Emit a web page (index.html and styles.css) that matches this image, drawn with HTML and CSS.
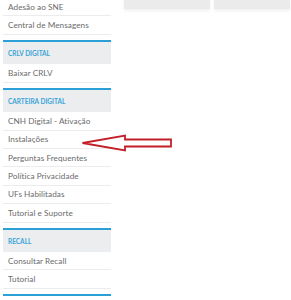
FILE: index.html
```html
<!DOCTYPE html>
<html lang="pt-BR">
<head>
    <meta charset="UTF-8">
    <meta name="viewport" content="width=device-width, initial-scale=1.0">
    <title>Menu</title>
    <link rel="stylesheet" href="styles.css">
</head>
<body>
    <div class="page">
        <!-- Menu lateral -->
        <aside class="sidebar">
            <ul class="menu">
                <li><a href="#">Adesão ao SNE</a></li>
                <li><a href="#">Central de Mensagens</a></li>
            </ul>
            <div class="menu-section">
                <h3>CRLV Digital</h3>
                <ul class="menu">
                    <li><a href="#">Baixar CRLV</a></li>
                </ul>
            </div>
            <div class="menu-section">
                <h3>Carteira Digital</h3>
                <ul class="menu">
                    <li><a href="#">CNH Digital - Ativação</a></li>
                    <li><a href="#">Instalações</a></li>
                    <li><a href="#">Perguntas Frequentes</a></li>
                    <li><a href="#">Política Privacidade</a></li>
                    <li><a href="#">UFs Habilitadas</a></li>
                    <li><a href="#">Tutorial e Suporte</a></li>
                </ul>
            </div>
            <div class="menu-section">
                <h3>Recall</h3>
                <ul class="menu">
                    <li><a href="#">Consultar Recall</a></li>
                    <li><a href="#">Tutorial</a></li>
                </ul>
            </div>
            <div class="menu-section"></div>
        </aside>

        <!-- Conteúdo -->
        <main class="content">
            <div class="cards">
                <div class="card"></div>
                <div class="card"></div>
            </div>
        </main>
    </div>

    <!-- Seta de destaque -->
    <svg class="arrow" width="100" height="24" viewBox="0 0 100 24">
        <path d="M1.5 12 L44 4.5 L44 8.5 L90 8.5 L90 15.5 L44 15.5 L44 19.5 Z"
              fill="none" stroke="#c41f28" stroke-width="1.8" stroke-linejoin="miter"/>
    </svg>
</body>
</html>
```

FILE: styles.css
```css
* {
    margin: 0;
    padding: 0;
    box-sizing: border-box;
}

body {
    background-color: #ffffff;
    font-family: 'Lato', 'Open Sans', sans-serif;
    overflow: hidden;
}

.page {
    display: flex;
    margin-top: -2px;
}

.sidebar {
    width: 108px;
    margin-left: 3px;
    flex-shrink: 0;
}

.menu {
    list-style: none;
}

.menu li {
    height: 18.4px;
    border-bottom: 1px solid #ececec;
    display: flex;
    align-items: center;
}

.menu li a {
    color: #6b6b6b;
    text-decoration: none;
    font-size: 8.2px;
    letter-spacing: 0.05px;
    padding-left: 5px;
    white-space: nowrap;
}

.menu-section {
    margin-top: 5.5px;
    border-top: 2px solid #2aa0d6; /* Azul */
}

.menu-section h3 {
    height: 22px;
    background-color: #ebedef;
    color: #3aa5d8;
    font-size: 6.5px;
    font-weight: bold;
    text-transform: uppercase;
    padding-left: 5px;
    display: flex;
    align-items: center;
}

.content {
    flex: 1;
    padding-left: 13px;
}

.cards {
    display: flex;
    gap: 4px;
}

.card {
    height: 11px;
    background-color: #ebebeb;
    box-shadow: 0px 2px 3px rgba(0, 0, 0, 0.06);
}

.card:first-child {
    width: 86px;
}

.card:last-child {
    width: 76px;
}

.arrow {
    position: absolute;
    left: 81px;
    top: 131px;
}
```
